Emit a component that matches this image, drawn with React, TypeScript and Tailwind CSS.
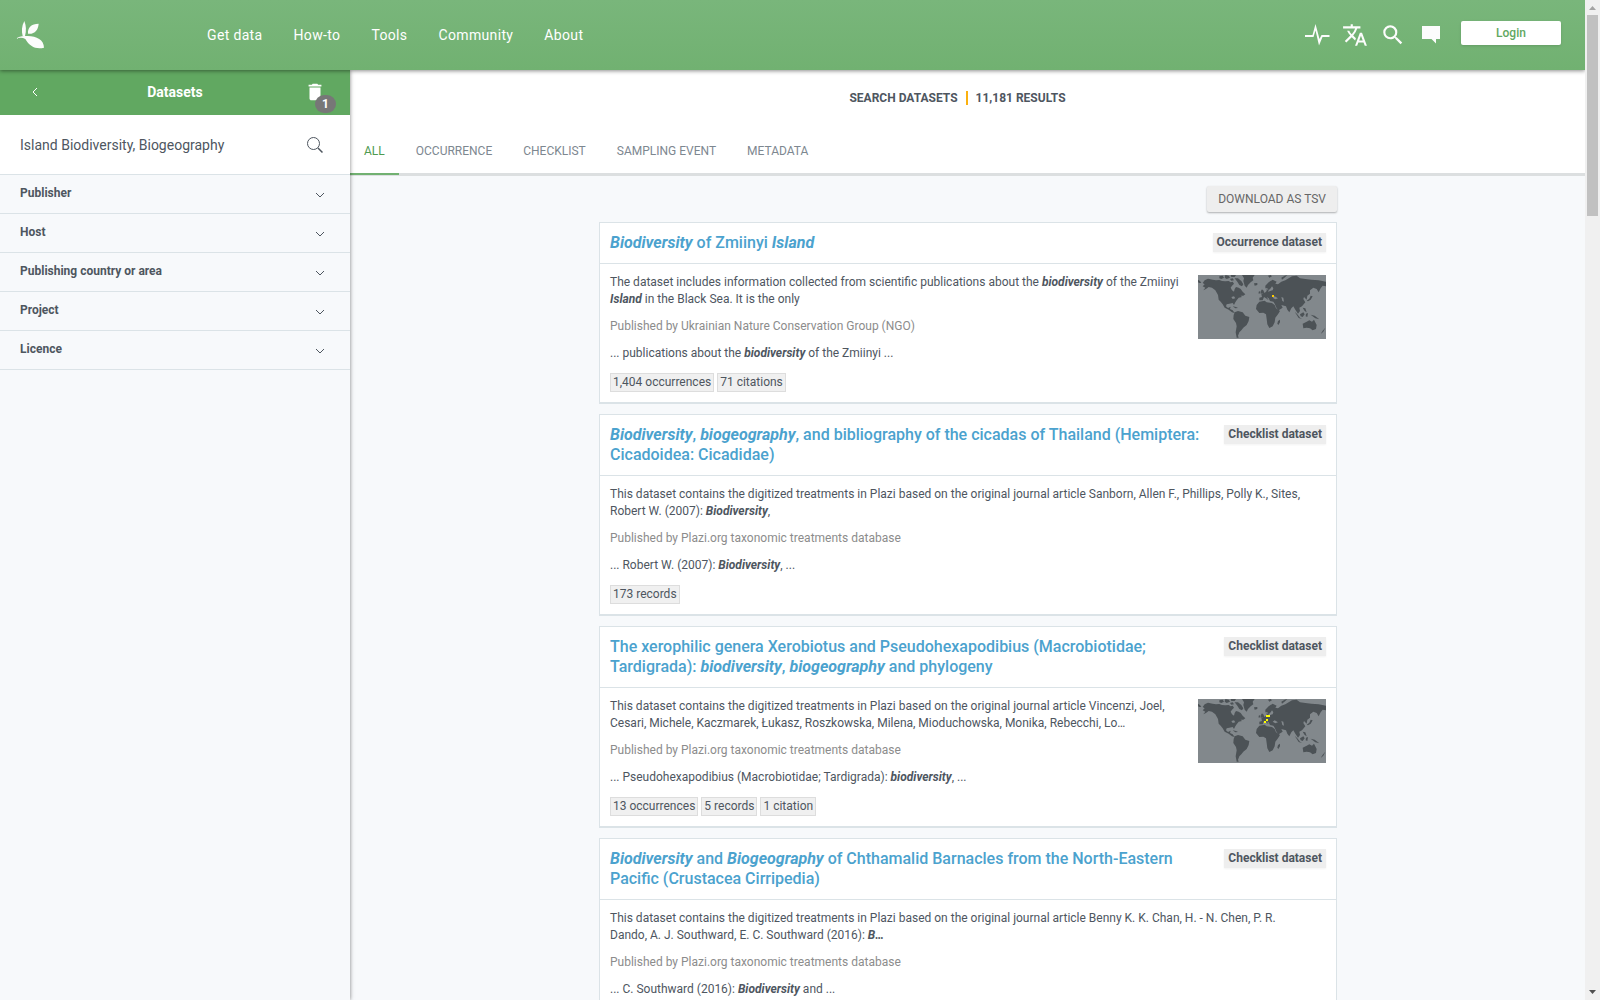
import type { ReactNode } from 'react';
import { MdDelete, MdSearch, MdTranslate } from 'react-icons/md';

const NAV = ['Get data', 'How-to', 'Tools', 'Community', 'About'];
const FILTERS = ['Publisher', 'Host', 'Publishing country or area', 'Project', 'Licence'];
const TABS = ['All', 'Occurrence', 'Checklist', 'Sampling event', 'Metadata'];

// grid cells with records, in map units
type Cell = [x: number, y: number, w: number, color: string];

type Dataset = {
  title: ReactNode;
  kind: string;
  description: ReactNode;
  publisher: string;
  match: ReactNode;
  counts: string[];
  cells?: Cell[];
};

function Hit({ children }: { children: ReactNode }) {
  return <em className="font-bold italic">{children}</em>;
}

const DATASETS: Dataset[] = [
  {
    title: <><Hit>Biodiversity</Hit> of Zmiinyi <Hit>Island</Hit></>,
    kind: 'Occurrence dataset',
    description: (
      <>
        The dataset includes information collected from scientific publications about the{' '}
        <Hit>biodiversity</Hit> of the Zmiinyi <Hit>Island</Hit> in the Black Sea. It is the only
      </>
    ),
    publisher: 'Ukrainian Nature Conservation Group (NGO)',
    match: <>... publications about the <Hit>biodiversity</Hit> of the Zmiinyi ...</>,
    counts: ['1,404 occurrences', '71 citations'],
    cells: [[222, 60, 6, '#ffcc00']],
  },
  {
    title: (
      <>
        <Hit>Biodiversity</Hit>, <Hit>biogeography</Hit>, and bibliography of the cicadas of
        Thailand (Hemiptera: Cicadoidea: Cicadidae)
      </>
    ),
    kind: 'Checklist dataset',
    description: (
      <>
        This dataset contains the digitized treatments in Plazi based on the original journal
        article Sanborn, Allen F., Phillips, Polly K., Sites, Robert W. (2007):{' '}
        <Hit>Biodiversity</Hit>,
      </>
    ),
    publisher: 'Plazi.org taxonomic treatments database',
    match: <>... Robert W. (2007): <Hit>Biodiversity</Hit>, ...</>,
    counts: ['173 records'],
  },
  {
    title: (
      <>
        The xerophilic genera Xerobiotus and Pseudohexapodibius (Macrobiotidae; Tardigrada):{' '}
        <Hit>biodiversity</Hit>, <Hit>biogeography</Hit> and phylogeny
      </>
    ),
    kind: 'Checklist dataset',
    description: (
      <>
        This dataset contains the digitized treatments in Plazi based on the original journal
        article Vincenzi, Joel, Cesari, Michele, Kaczmarek, Łukasz, Roszkowska, Milena,
        Mioduchowska, Monika, Rebecchi, Lo…
      </>
    ),
    publisher: 'Plazi.org taxonomic treatments database',
    match: (
      <>... Pseudohexapodibius (Macrobiotidae; Tardigrada): <Hit>biodiversity</Hit>, ...</>
    ),
    counts: ['13 occurrences', '5 records', '1 citation'],
    cells: [
      [204, 48, 12, '#ffff00'],
      [204, 60, 6, '#ffff00'],
      [198, 66, 6, '#ffff00'],
    ],
  },
  {
    title: (
      <>
        <Hit>Biodiversity</Hit> and <Hit>Biogeography</Hit> of Chthamalid Barnacles from the
        North-Eastern Pacific (Crustacea Cirripedia)
      </>
    ),
    kind: 'Checklist dataset',
    description: (
      <>
        This dataset contains the digitized treatments in Plazi based on the original journal
        article Benny K. K. Chan, H. - N. Chen, P. R. Dando, A. J. Southward, E. C. Southward
        (2016): <Hit>B…</Hit>
      </>
    ),
    publisher: 'Plazi.org taxonomic treatments database',
    match: <>... C. Southward (2016): <Hit>Biodiversity</Hit> and ...</>,
    counts: [],
  },
];

const LAND = [
  // North and Central America
  'M14 24 L20 16 L30 11 L44 14 L54 16 L64 15 L72 18 L82 19 L92 18 L98 22 L104 20 L108 26 L102 32 L98 38 L102 46 L108 50 L110 42 L114 36 L122 38 L128 42 L134 50 L142 58 L136 62 L128 62 L132 66 L122 68 L116 76 L112 82 L108 90 L104 84 L94 86 L86 88 L84 94 L90 99 L98 95 L96 102 L104 106 L110 114 L102 112 L92 104 L80 98 L74 88 L68 80 L62 74 L60 60 L52 46 L42 38 L32 36 L24 42 L16 46 L22 38 L14 34 L20 28 Z',
  'M0 14 L6 18 L10 24 L4 24 L0 22 Z',
  'M64 4 L74 2 L78 8 L70 12 L64 10 Z',
  'M82 0 L92 2 L96 8 L86 12 L80 8 Z',
  'M98 0 L114 0 L110 6 L100 6 Z',
  'M96 12 L104 10 L108 16 L100 17 Z',
  'M110 10 L120 10 L130 18 L136 28 L132 34 L124 30 L118 20 Z',
  'M104 94 L114 96 L120 99 L112 100 Z',
  // Greenland and Iceland
  'M132 0 L170 0 L164 8 L166 16 L158 22 L150 30 L146 38 L140 32 L136 18 L138 10 Z',
  'M168 25 L178 24 L178 30 L170 32 Z',
  // South America
  'M110 112 L120 108 L134 112 L142 122 L154 126 L152 138 L146 150 L136 158 L130 166 L124 172 L120 182 L122 188 L116 188 L113 172 L116 154 L114 144 L106 132 L107 120 Z',
  // Africa
  'M184 80 L200 77 L206 82 L222 84 L230 90 L234 100 L246 108 L240 118 L232 128 L230 142 L224 154 L214 159 L208 148 L206 132 L204 118 L196 113 L184 114 L174 102 L176 90 Z',
  'M240 138 L246 134 L246 142 L241 150 L238 146 Z',
  // Europe and Asia
  'M184 76 L184 68 L192 66 L190 58 L200 54 L206 48 L206 42 L212 46 L210 50 L224 46 L226 40 L222 34 L218 40 L212 46 L208 40 L202 40 L202 32 L212 22 L224 14 L236 20 L232 26 L240 28 L250 20 L262 16 L272 10 L282 4 L296 2 L306 10 L322 12 L340 14 L362 16 L384 20 L384 34 L374 32 L368 40 L362 52 L356 42 L346 38 L336 46 L336 56 L328 62 L326 74 L318 66 L316 72 L322 82 L312 94 L304 98 L306 108 L300 116 L292 104 L286 94 L280 100 L274 112 L268 104 L264 94 L250 90 L254 98 L242 106 L236 100 L230 86 L226 80 L216 78 L212 70 L206 66 L212 76 L204 70 L198 66 L194 76 Z',
  'M188 56 L190 44 L195 44 L200 55 Z',
  'M182 50 L187 48 L187 55 L182 56 Z',
  'M210 2 L218 0 L222 4 L214 8 Z',
  'M250 8 L260 2 L268 0 L262 6 L252 14 Z',
  'M338 62 L344 64 L338 74 L330 79 L326 77 L334 71 Z',
  // South-east Asia and Oceania
  'M290 110 L298 118 L306 128 L312 132 L302 129 Z',
  'M306 118 L316 112 L320 118 L314 126 L308 124 Z',
  'M314 98 L322 100 L326 112 L320 108 Z',
  'M324 116 L330 114 L328 126 L323 124 Z',
  'M338 119 L350 122 L364 133 L352 130 Z',
  'M314 146 L326 140 L334 136 L342 140 L348 134 L356 150 L354 162 L344 166 L336 160 L326 158 L316 160 Z',
  'M382 158 L376 170 L368 177 L374 167 Z',
].join(' ');

// Black Sea, Caspian Sea and the Great Lakes
const LAKES = [
  'M224 68 L230 64 L240 70 L232 73 Z',
  'M250 66 L256 68 L258 80 L253 78 Z',
  'M100 66 L108 64 L112 70 L104 72 Z',
].join(' ');

function MapThumb({ cells }: { cells: Cell[] }) {
  return (
    <svg viewBox="0 0 384 192" className="mt-px h-16 w-32 shrink-0 bg-[#82888c]" aria-hidden>
      <path d={LAND} fill="#4c5256" />
      <path d={LAKES} fill="#82888c" />
      {cells.map(([x, y, w, color]) => (
        <rect key={`${x}-${y}`} x={x} y={y} width={w} height={6} fill={color} shapeRendering="crispEdges" />
      ))}
    </svg>
  );
}

function Logo() {
  return (
    <svg viewBox="0 0 84 84" className="size-7" fill="#fcfcfc" aria-hidden>
      <path d="M25 0 C17 15 16 30 20 45 L27 45 C31 30 31 15 25 0 Z" />
      <path d="M68 8 C46 8 34 20 36 38 C56 40 66 28 68 8 Z" />
      <path d="M0 54 C8 45 20 44 32 45 C60 44 84 56 84 80 C60 86 40 76 28 54 C18 49 9 50 0 54 Z" />
    </svg>
  );
}

function Header() {
  return (
    <header className="relative z-20 flex h-[70px] shrink-0 items-center bg-linear-to-b from-[#79b67b] to-[#71b171] pr-6 pl-4 text-white shadow-[0_1px_4px_rgba(0,0,0,0.45)]">
      <a href="#" aria-label="Home" className="w-[191px]">
        <Logo />
      </a>
      <nav className="flex flex-1 gap-[31px] text-sm tracking-wide">
        {NAV.map((item) => (
          <a key={item} href="#">{item}</a>
        ))}
      </nav>
      <div className="flex items-center gap-3 text-[#fcfcfc]">
        <button aria-label="Health">
          <svg viewBox="0 0 26 26" className="size-[26px]" fill="currentColor" aria-hidden>
            <path d="M1 13 H8.500 L11.500 2 L15.500 17 L17.500 13 H25.500 V15 H18.500 L15 23.500 L11.500 8.500 L9.500 15 H1 Z" />
          </svg>
        </button>
        <button aria-label="Language"><MdTranslate size={26} /></button>
        <button aria-label="Search"><MdSearch size={26} /></button>
        <button aria-label="Feedback">
          <svg viewBox="0 0 26 26" className="size-[26px]" fill="currentColor" aria-hidden>
            <path d="M4 4 H22 V17 H18 V21.500 L13.500 17 H4 Z" />
          </svg>
        </button>
      </div>
      <button className="mb-1 ml-[17px] h-6 w-[100px] rounded-xs bg-white text-xs font-medium text-[#61a861] shadow-sm">
        Login
      </button>
    </header>
  );
}

function Sidebar() {
  return (
    <aside className="relative z-10 w-[350px] shrink-0 bg-[#f7f9fb] shadow-[0_0_4px_rgba(0,0,0,0.5)]">
      <div className="flex h-[45px] items-center bg-[#61a861] px-6 pb-0.5 text-white">
        <button aria-label="Back" className="w-9 pl-2">
          <svg viewBox="0 0 6 10" className="h-2.5 w-1.5" fill="none" stroke="currentColor" aria-hidden>
            <path d="M5 1 L1 5 L5 9" />
          </svg>
        </button>
        <h2 className="flex-1 text-center text-sm font-bold">Datasets</h2>
        <button aria-label="Clear filters" className="relative flex w-9 justify-end">
          <MdDelete size={22} />
          <span className="absolute top-3.5 -right-2.5 h-[18px] w-[21px] rounded-full bg-[#777] text-center text-xs leading-[18px] font-bold">
            1
          </span>
        </button>
      </div>
      <form className="flex h-[60px] items-center border-b border-[#dbe3e7] bg-white pr-[26px] pl-5">
        <input
          aria-label="Search datasets"
          defaultValue="Island Biodiversity, Biogeography"
          className="min-w-0 flex-1 text-sm outline-none"
        />
        <button type="button" aria-label="Search">
          <svg viewBox="0 0 18 18" className="size-[18px]" fill="none" stroke="currentColor" aria-hidden>
            <circle cx="7.5" cy="7.5" r="6" />
            <path d="M12 12 L16.500 16.500" strokeWidth="1.500" />
          </svg>
        </button>
      </form>
      {FILTERS.map((name) => (
        <button
          key={name}
          className="flex h-[39px] w-full items-center justify-between border-b border-[#dbe3e7] pr-6 pb-0.5 pl-5 text-xs font-bold"
        >
          {name}
          <svg viewBox="0 0 10 6" className="mt-1 mr-px h-1.5 w-2.5" fill="none" stroke="currentColor" aria-hidden>
            <path d="M1 1 L5 5 L9 1" />
          </svg>
        </button>
      ))}
    </aside>
  );
}

function DatasetCard({ dataset }: { dataset: Dataset }) {
  return (
    <article className="border border-b-2 border-[#dbe3e7] bg-white">
      <header className="flex items-start justify-between gap-4 border-b border-[#dbe3e7] p-2.5">
        <h3 className="text-base leading-5 font-medium text-[#4ba2ce]">
          <a href="#">{dataset.title}</a>
        </h3>
        <span className="shrink-0 bg-[#eee] px-1 text-xs leading-[19px] font-bold shadow-xs">
          {dataset.kind}
        </span>
      </header>
      <div className="flex items-start p-2.5">
        <div className="flex-1 pr-3 text-xs leading-[17px]">
          <p>{dataset.description}</p>
          <p className="mt-2.5 text-[#8c8c8c]">Published by {dataset.publisher}</p>
          <p className="mt-2.5">{dataset.match}</p>
          <ul className="mt-[11px] flex gap-[3px]">
            {dataset.counts.map((count) => (
              <li key={count} className="border border-[#ddd] bg-[#f0f0f0] px-0.5">{count}</li>
            ))}
          </ul>
        </div>
        {dataset.cells && <MapThumb cells={dataset.cells} />}
      </div>
    </article>
  );
}

function Results() {
  return (
    <main className="flex min-w-0 flex-1 flex-col bg-[#f7f9fb]">
      <div className="border-b-[3px] border-[#dcdfe0] bg-white">
        <div className="flex h-14 items-center justify-center pr-5 text-xs font-bold uppercase">
          <h1>Search datasets</h1>
          <span className="mx-2 h-3.5 w-0.5 bg-[#fbb110]" />
          <span>11,181 results</span>
        </div>
        <nav className="-mb-[3px] flex gap-[3px] text-xs text-[#7d8790] uppercase">
          {TABS.map((tab, i) => (
            <a
              key={tab}
              href="#"
              className={`mb-px flex h-[49px] items-center border-b-2 px-3.5 pt-0.5 ${
                i === 0 ? 'border-[#71b171] text-[#4e9a50]' : 'border-transparent'
              }`}
            >
              {tab}
            </a>
          ))}
        </nav>
      </div>
      <div className="pt-2.5 pl-px">
        <div className="mx-auto w-full max-w-[738px]">
          <div className="flex justify-end">
            <button className="h-[26px] rounded-xs bg-[#eee] px-[11px] text-xs text-[#666] uppercase shadow-[0_1px_2px_rgba(0,0,0,0.3)]">
              Download as TSV
            </button>
          </div>
          <div className="mt-2.5 flex flex-col gap-2.5">
            {DATASETS.map((dataset, i) => (
              <DatasetCard key={i} dataset={dataset} />
            ))}
          </div>
        </div>
      </div>
    </main>
  );
}

function Scrollbar() {
  return (
    <div className="flex w-[15px] shrink-0 flex-col items-center justify-between bg-[#f0f0f0]" aria-hidden>
      <div className="flex flex-col items-center">
        <svg viewBox="0 0 7 4" className="mt-1.5 mb-[5px] h-1 w-[7px]" fill="#a3a3a3">
          <path d="M0 4 L3.500 0 L7 4 Z" />
        </svg>
        <div className="h-[201px] w-[11px] bg-[#c1c1c1]" />
      </div>
      <svg viewBox="0 0 7 4" className="mb-1.5 h-1 w-[7px]" fill="#505050">
        <path d="M0 0 L3.500 4 L7 0 Z" />
      </svg>
    </div>
  );
}

export default function App() {
  return (
    <div className="flex h-screen overflow-hidden font-['Roboto',sans-serif] text-[#4e565f]">
      <div className="flex min-w-0 flex-1 flex-col overflow-hidden">
        <Header />
        <div className="flex min-h-0 flex-1">
          <Sidebar />
          <Results />
        </div>
      </div>
      <Scrollbar />
    </div>
  );
}
